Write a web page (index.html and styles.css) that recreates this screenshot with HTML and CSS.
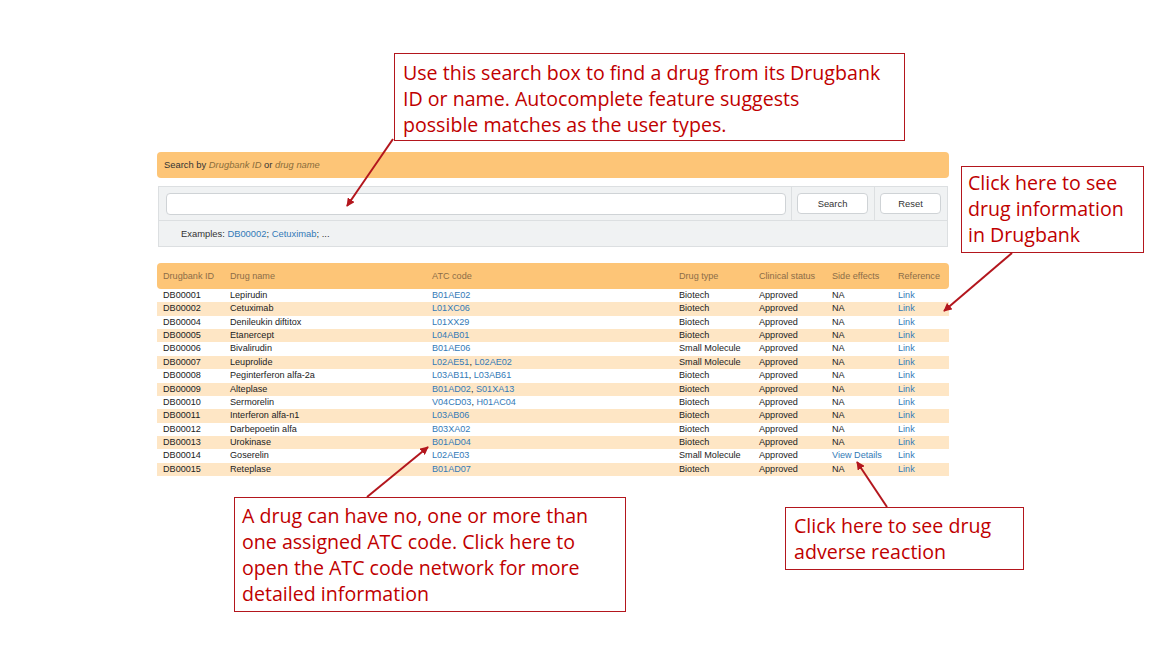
FILE: index.html
```html
<!DOCTYPE html>
<html>
<head>
<meta charset="utf-8">
<link rel="stylesheet" href="styles.css">
</head>
<body>
<div class="stage">
  <div class="panel">
    <div class="search-head">Search by <em>Drugbank ID</em> or <em>drug name</em></div>
    <div class="search-box">
      <div class="cell cell-input"><div class="input"></div></div>
      <div class="cell cell-btn"><div class="btn btn-search">Search</div></div>
      <div class="cell cell-btn cell-last"><div class="btn btn-reset">Reset</div></div>
      <div class="examples">Examples: <a>DB00002</a>; <a>Cetuximab</a>; ...</div>
    </div>

    <table class="drugs">
      <thead>
        <tr>
          <th class="c1">Drugbank ID</th><th class="c2">Drug name</th><th class="c3">ATC code</th><th class="c4">Drug type</th><th class="c5">Clinical status</th><th class="c6">Side effects</th><th class="c7">Reference</th>
        </tr>
      </thead>
      <tbody>
        <tr><td>DB00001</td><td>Lepirudin</td><td><a>B01AE02</a></td><td>Biotech</td><td>Approved</td><td>NA</td><td><a>Link</a></td></tr>
        <tr><td>DB00002</td><td>Cetuximab</td><td><a>L01XC06</a></td><td>Biotech</td><td>Approved</td><td>NA</td><td><a>Link</a></td></tr>
        <tr><td>DB00004</td><td>Denileukin diftitox</td><td><a>L01XX29</a></td><td>Biotech</td><td>Approved</td><td>NA</td><td><a>Link</a></td></tr>
        <tr><td>DB00005</td><td>Etanercept</td><td><a>L04AB01</a></td><td>Biotech</td><td>Approved</td><td>NA</td><td><a>Link</a></td></tr>
        <tr><td>DB00006</td><td>Bivalirudin</td><td><a>B01AE06</a></td><td>Small Molecule</td><td>Approved</td><td>NA</td><td><a>Link</a></td></tr>
        <tr><td>DB00007</td><td>Leuprolide</td><td><a>L02AE51</a>, <a>L02AE02</a></td><td>Small Molecule</td><td>Approved</td><td>NA</td><td><a>Link</a></td></tr>
        <tr><td>DB00008</td><td>Peginterferon alfa-2a</td><td><a>L03AB11</a>, <a>L03AB61</a></td><td>Biotech</td><td>Approved</td><td>NA</td><td><a>Link</a></td></tr>
        <tr><td>DB00009</td><td>Alteplase</td><td><a>B01AD02</a>, <a>S01XA13</a></td><td>Biotech</td><td>Approved</td><td>NA</td><td><a>Link</a></td></tr>
        <tr><td>DB00010</td><td>Sermorelin</td><td><a>V04CD03</a>, <a>H01AC04</a></td><td>Biotech</td><td>Approved</td><td>NA</td><td><a>Link</a></td></tr>
        <tr><td>DB00011</td><td>Interferon alfa-n1</td><td><a>L03AB06</a></td><td>Biotech</td><td>Approved</td><td>NA</td><td><a>Link</a></td></tr>
        <tr><td>DB00012</td><td>Darbepoetin alfa</td><td><a>B03XA02</a></td><td>Biotech</td><td>Approved</td><td>NA</td><td><a>Link</a></td></tr>
        <tr><td>DB00013</td><td>Urokinase</td><td><a>B01AD04</a></td><td>Biotech</td><td>Approved</td><td>NA</td><td><a>Link</a></td></tr>
        <tr><td>DB00014</td><td>Goserelin</td><td><a>L02AE03</a></td><td>Small Molecule</td><td>Approved</td><td class="vd"><a>View Details</a></td><td><a>Link</a></td></tr>
        <tr><td>DB00015</td><td>Reteplase</td><td><a>B01AD07</a></td><td>Biotech</td><td>Approved</td><td>NA</td><td><a>Link</a></td></tr>
      </tbody>
    </table>
  </div>

  <svg class="arrows" width="1156" height="652" viewBox="0 0 1156 652">
    <defs>
      <marker id="ah" viewBox="0 0 10 10" refX="9" refY="5" markerWidth="4.2" markerHeight="4.2" markerUnits="strokeWidth" orient="auto">
        <path d="M0 0 L10 5 L0 10 Z" fill="#b3161d"/>
      </marker>
    </defs>
    <line x1="393" y1="139" x2="347" y2="206" stroke="#b3161d" stroke-width="2" marker-end="url(#ah)"/>
    <line x1="1012" y1="253" x2="944" y2="311" stroke="#b3161d" stroke-width="2" marker-end="url(#ah)"/>
    <line x1="367" y1="497" x2="428" y2="447" stroke="#b3161d" stroke-width="2" marker-end="url(#ah)"/>
    <line x1="887" y1="507" x2="857" y2="462" stroke="#b3161d" stroke-width="2" marker-end="url(#ah)"/>
  </svg>

  <div class="note note-search">Use this search box to find a drug from its Drugbank<br>ID or name. Autocomplete feature suggests<br>possible matches as the user types.</div>
  <div class="note note-ref">Click here to see<br>drug information<br>in Drugbank</div>
  <div class="note note-atc">A drug can have no, one or more than<br>one assigned ATC code. Click here to<br>open the ATC code network for more<br>detailed information</div>
  <div class="note note-side">Click here to see drug<br>adverse reaction</div>
</div>
</body>
</html>
```

FILE: styles.css
```css
* { box-sizing: border-box; }
html, body {
  margin: 0;
  padding: 0;
  background: #ffffff;
}
.stage {
  position: relative;
  width: 1156px;
  height: 652px;
  overflow: hidden;
  font-family: "Liberation Sans", Arial, sans-serif;
  color: #333333;
}
a { color: #337ab7; text-decoration: none; }

.panel {
  width: 792px;
  margin-left: 157px;
  padding-top: 152px;
  font-size: 9px;
}

.search-head {
  height: 26px;
  line-height: 26px;
  padding-left: 7px;
  background: #fdc577;
  border-radius: 4px;
  color: #333333;
  font-size: 9.4px;
}
.search-head em {
  font-style: italic;
  color: #8a6d3b;
}

.search-box {
  margin: 8px 1px 0 1px;
  display: grid;
  grid-template-columns: 633px 83px 1fr;
  grid-template-rows: 34px 25px;
  background: #f0f2f3;
  border: 1px solid #dcdfe1;
  font-size: 9.4px;
}
.cell {
  display: flex;
  align-items: center;
  border-right: 1px solid #dcdfe1;
  border-bottom: 1px solid #dcdfe1;
}
.cell-last { border-right: none; }
.cell-input { padding: 0 5px 0 7px; }
.input {
  width: 100%;
  height: 22px;
  background: #ffffff;
  border: 1px solid #cfd3d6;
  border-radius: 4px;
}
.cell-btn { padding-left: 5px; }
.btn {
  height: 21px;
  line-height: 19px;
  text-align: center;
  background: #ffffff;
  border: 1px solid #cfd3d6;
  border-radius: 4px;
  color: #333333;
}
.btn-search { width: 71px; }
.btn-reset { width: 61px; }
.examples {
  grid-column: 1 / 4;
  padding-left: 22px;
  line-height: 25px;
}

.drugs {
  margin-top: 16px;
  width: 792px;
  border-collapse: separate;
  border-spacing: 0;
  table-layout: fixed;
  font-size: 9.1px;
}
.drugs th {
  height: 26px;
  padding: 0 0 0 6px;
  text-align: left;
  font-weight: normal;
  color: #8c6d48;
  background: #fdc577;
}
.drugs th:first-child { border-radius: 4px 0 0 4px; }
.drugs th:last-child { border-radius: 0 4px 4px 0; }
.c1 { width: 67px; }
.c2 { width: 202px; }
.c3 { width: 247px; }
.c4 { width: 80px; }
.c5 { width: 73px; }
.c6 { width: 66px; }
.c7 { width: 57px; }
.drugs td {
  padding: 0 0 0 6px;
  height: 13.36px;
  line-height: 13.36px;
  white-space: nowrap;
  color: #222222;
}
.drugs tbody tr:nth-child(even) td { background: #fee6c5; }

.arrows {
  position: absolute;
  left: 0;
  top: 0;
  pointer-events: none;
}

.note {
  position: absolute;
  border: 1px solid #b3161d;
  color: #c00000;
  background: #ffffff;
  font-family: "Open Sans", "Noto Sans", sans-serif;
  font-size: 19.6px;
  line-height: 26px;
  white-space: nowrap;
}
.note-search { left: 394px; top: 53px; width: 511px; height: 88px; padding: 6px 0 0 8px; }
.note-ref { left: 961px; top: 166px; width: 183px; height: 87px; padding: 3px 0 0 6px; }
.note-atc { left: 234px; top: 497px; width: 392px; height: 115px; padding: 5px 0 0 7px; }
.note-side { left: 785px; top: 507px; width: 239px; height: 63px; padding: 5px 0 0 8px; }
```
